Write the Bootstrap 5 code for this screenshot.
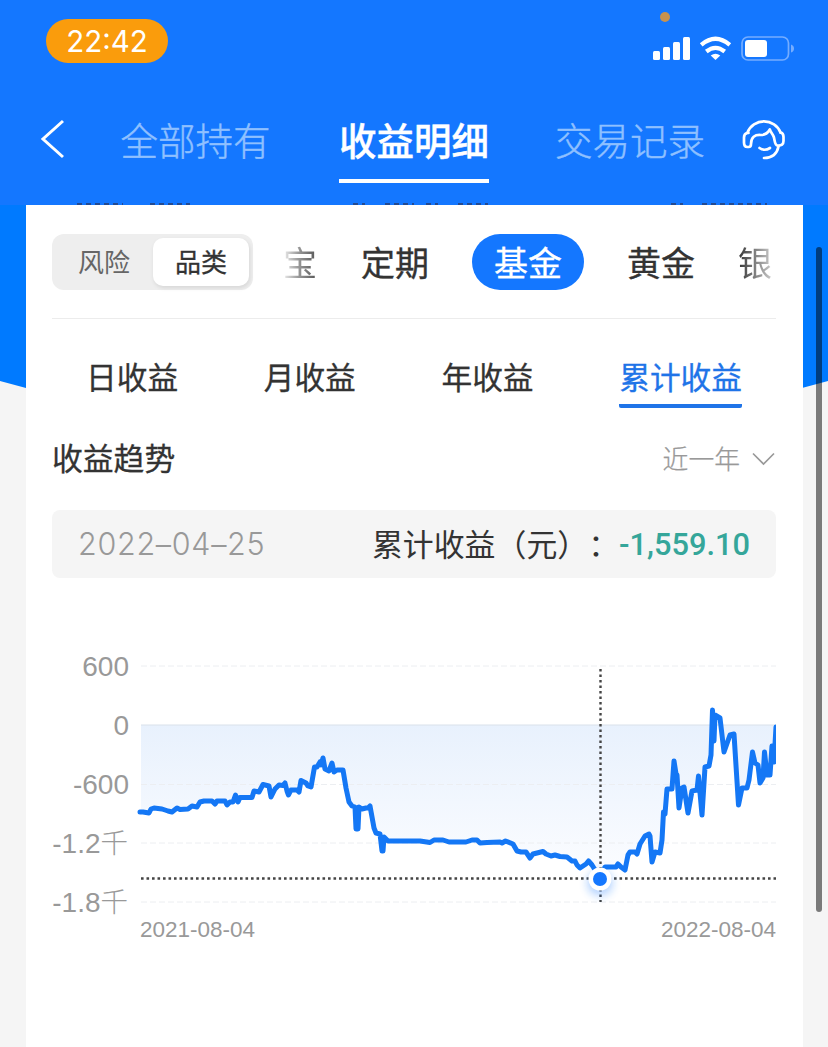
<!DOCTYPE html>
<html lang="zh-CN">
<head>
<meta charset="utf-8">
<meta name="viewport" content="width=device-width, initial-scale=1">
<title>收益明细</title>
<link href="https://cdn.jsdelivr.net/npm/bootstrap@5.3.0/dist/css/bootstrap.min.css" rel="stylesheet">
<style>
  :root { --brand: #1477ff; --ink: #333; --muted: #999; }
  body { font-family: "Liberation Sans", "Noto Sans CJK SC", sans-serif; background: #f5f5f5; color: var(--ink); width: 828px; height: 1047px; overflow: hidden; line-height: 1; text-spacing-trim: space-all; }
  svg { display: block; flex: none; }
  .screen { height: 1047px; }
  .app-head { height: 205px; background: var(--brand); color: #fff; z-index: 2; }
  .status-row { height: 83px; padding: 19px 34px 0 46px; }
  .clock { width: 122px; height: 44px; background: #fa9c0c; font: 400 29.5px/45px Inter, sans-serif; }
  .status-icons { padding-top: 17px; }
  .mic-dot { left: 660px; top: 12px; width: 10px; height: 10px; background: #c8924e; }
  .nav-row { height: 122px; padding-left: 40px; font-size: 37.5px; }
  .nav-row .head-tab { height: 74px; margin-top: 26px; padding-top: 15px; line-height: 37px; color: #8fc0ff; white-space: nowrap; font-weight: 300; -webkit-text-stroke: .4px; }
  .nav-row .head-tab.active { color: #fff; font-weight: 500; border-bottom: 4.5px solid #fff; width: 150px; }
  .body-area::before { content: ""; position: absolute; left: 0; right: 0; top: 0; height: 200px; background: #007aff; clip-path: polygon(0 0, 100% 0, 100% 176px, 802px 183px, 26px 183px, 0 176px); }
  .sheet { width: 777px; height: 842px; margin-left: 25.5px; background: #fff; padding: 29px 26.5px 0; }
  .filter-row { height: 56px; }
  .segment { width: 201px; height: 56px; background: #eee; border-radius: 12px; padding: 4px; font-size: 26px; color: #666; }
  .segment span { padding-top: 2px; }
  .segment .seg-on { width: 96px; height: 48px; border-radius: 10px; background: #fff; color: var(--ink); box-shadow: 1px 2px 4px rgba(0,0,0,.1); -webkit-text-stroke: .3px; }
  .segment .seg-off { width: 97px; padding-right: 1px; }
  .kinds { font-size: 34px; height: 56px; margin-left: 30px; width: 493px; white-space: nowrap; line-height: 48px; -webkit-text-stroke: .35px; }
  .kinds span { padding-top: 3px; }
  .kinds .kind-on { width: 112px; height: 56px; background: var(--brand); color: #fff; }
  .kinds .fade-l, .kinds .fade-r { -webkit-background-clip: text; background-clip: text; color: transparent; -webkit-text-stroke: 0; }
  .kinds .fade-l { background-image: linear-gradient(90deg, #eee 0, #999 45%, #555 100%); }
  .kinds .fade-r { background-image: linear-gradient(90deg, #333 0, #777 45%, #ccc 100%); }
  .rule { height: 1px; background: #ececec; margin-top: 28px; }
  .periods { font-size: 30.7px; padding: 42px 34px 0 34px; height: 89px; -webkit-text-stroke: .3px; }
  .periods .period { height: 47px; line-height: 36px; }
  .periods .period.active { color: #1f74e8; border-bottom: 4px solid #1f74e8; border-radius: 2px; }
  .trend { height: 102px; font-size: 30.8px; }
  .trend .trend-title { padding-top: 3px; -webkit-text-stroke: .3px; }
  .range { font-size: 25.8px; color: var(--muted); font-weight: 300; }
  .range .range-name { padding-top: 3px; -webkit-text-stroke: .25px; }
  .summary { height: 68px; background: #f5f5f5; border-radius: 8px; padding: 0 26px; font-size: 30.9px; }
  .summary .summary-name { padding-top: 4px; }
  .summary .day { font: 300 30.5px/1 Inter, sans-serif; color: var(--muted); letter-spacing: .7px; }
  .summary .amount { font: 500 30.8px/1 Roboto, sans-serif; color: #35a69a; padding-top: 3px; }
  .chart { margin-top: 62px; }
  .chart text { fill: var(--muted); }
  .thumb { left: 816px; top: 247px; width: 6px; height: 665px; background: rgba(0,0,0,.5); z-index: 3; }
</style>
</head>
<body>
<div class="screen position-relative">
  <header class="app-head position-relative">
    <span class="mic-dot position-absolute rounded-circle"></span>
    <div class="status-row d-flex justify-content-between align-items-start">
      <div class="clock rounded-pill text-center">22:42</div>
      <div class="status-icons d-flex">
        <svg width="142" height="27" viewBox="652 36 142 27">
          <g fill="#fff"><rect x="653" y="51" width="7" height="9" rx="1.5"/><rect x="663" y="47" width="7" height="13" rx="1.5"/><rect x="673" y="42" width="7" height="18" rx="1.5"/><rect x="683" y="37" width="7" height="23" rx="1.5"/>
          <path d="M715.5 60l-4.800-4.400q4.800-3.600 9.600 0z"/></g>
          <g fill="none" stroke="#fff" stroke-width="4.200"><path d="M701.200 44.800q14.300-12.200 28.600 0"/><path d="M706.300 51.500q9.200-7.400 18.400 0"/></g>
          <rect x="742" y="37" width="46.500" height="23" rx="6" fill="none" stroke="#75adff" stroke-width="1.700"/><rect x="745" y="40" width="22" height="17" rx="3" fill="#fff"/><path d="M791 44.500q3 1 3 4t-3 4z" fill="#75adff"/>
        </svg>
      </div>
    </div>
    <nav class="nav-row d-flex align-items-start">
      <svg width="26" height="40" viewBox="40 119 26 40" style="margin-top:36px"><path d="M63 121L43 139l20 18" fill="none" stroke="#fff" stroke-width="3"/></svg>
      <span class="head-tab" style="margin-left:54.5px">全部持有</span>
      <span class="head-tab active" style="margin-left:68.500px">收益明细</span>
      <span class="head-tab" style="margin-left:66px">交易记录</span>
      <svg width="46" height="44" viewBox="741 118 46 44" style="margin-left:36px;margin-top:35px">
        <g fill="none" stroke="#fff" stroke-width="2.700" stroke-linecap="round" stroke-linejoin="round">
          <path d="M747.5 132.500C750 125.500 757 121.300 764 121.300S778 125.500 780.500 132.500"/>
          <path d="M748.500 133h-1q-3.500.5-3.500 4.500v5q0 4.500 3.400 4.500h1.200q2.400 0 2.400-3c0-7 4-9.300 9.500-9 4.500.2 7-1.500 9.300-5.500 1.200 3.500 3 4.500 4 7.500 1 3 .8 8.500 3.700 8.500 4 .3 6-1 6-4.500v-4q0-4-3-4.500"/>
          <path d="M778.500 146.500c-1.500 7.500-7 11.500-14.500 11.500"/><path d="M759.500 148q5 3.500 10.500 0"/>
        </g>
      </svg>
    </nav>
    <svg class="position-absolute start-0 bottom-0" width="828" height="2"><path d="M77 1H123M150 1H190M353 1H365M385 1H414M426 1H438M458 1H488M671 1H683M702 1H767" stroke="#234a91" stroke-width="2" stroke-dasharray="5 4"/></svg>
  </header>
  <main class="body-area position-relative">
    <section class="sheet position-relative">
      <div class="filter-row d-flex">
        <div class="segment d-flex align-items-center">
          <span class="seg-off text-center">风险</span>
          <span class="seg-on d-flex align-items-center justify-content-center">品类</span>
        </div>
        <div class="kinds d-flex align-items-center">
          <span class="fade-l">宝</span>
          <span style="margin-left:44px">定期</span>
          <span class="kind-on rounded-pill d-flex align-items-center justify-content-center" style="margin-left:43px">基金</span>
          <span style="margin-left:43px">黄金</span>
          <span class="fade-r" style="margin-left:43px">银</span>
        </div>
      </div>
      <div class="rule"></div>
      <div class="periods d-flex justify-content-between">
        <span class="period">日收益</span><span class="period">月收益</span><span class="period">年收益</span><span class="period active">累计收益</span>
      </div>
      <div class="trend d-flex align-items-center justify-content-between">
        <span class="trend-title">收益趋势</span>
        <span class="range d-flex align-items-center"><span class="range-name">近一年</span>
          <svg width="24" height="14" viewBox="752 451 24 14" style="margin-left:12px"><path d="M753 452.500l10.500 10.500 10.500-10.500" fill="none" stroke="#999" stroke-width="1.700"/></svg>
        </span>
      </div>
      <div class="summary d-flex align-items-center">
        <span class="day">2022–04–25</span>
        <span class="summary-name ms-auto">累计收益（元）：</span>
        <span class="amount">-1,559.10</span>
      </div>
      <svg class="chart" width="724" height="310" viewBox="52 640 724 310">
        <defs>
          <linearGradient id="wash" gradientUnits="userSpaceOnUse" x1="0" y1="725" x2="0" y2="880"><stop offset="0" stop-color="#e8f1fd"/><stop offset="1" stop-color="#fcfdff"/></linearGradient>
          <clipPath id="below"><rect x="141" y="725" width="635" height="180"/></clipPath>
          <filter id="glow" x="-60%" y="-60%" width="220%" height="220%"><feGaussianBlur stdDeviation="4"/></filter>
        </defs>
        <path id="fillArea" fill="url(#wash)" clip-path="url(#below)"/>
        <g stroke="#eceef1" stroke-width="1" stroke-dasharray="6 3"><path d="M141 666H776M141 784.500H776M141 843H776M141 902H776"/></g>
        <path d="M141 725H776" stroke="#d9e1ea"/>
        <path id="curve" fill="none" stroke="#1477f5" stroke-width="5" stroke-linecap="round" stroke-linejoin="round"/>
        <path d="M141 878.500H776M600.500 669V902" stroke="#444" stroke-width="2.400" stroke-dasharray="2.600 2.900"/>
        <circle cx="600" cy="883" r="13" fill="#1477ff" opacity=".3" filter="url(#glow)"/>
        <circle cx="600" cy="879" r="11.500" fill="#fff"/><circle cx="600" cy="879" r="7" fill="#1477ff"/>
        <g font-size="28" text-anchor="end"><text x="129" y="676">600</text><text x="129" y="735">0</text><text x="129" y="794">-600</text><text x="128" y="853">-1.2<tspan font-size="27.500" font-weight="300">千</tspan></text><text x="128" y="912">-1.8<tspan font-size="27.500" font-weight="300">千</tspan></text></g>
        <g font-size="22.500"><text x="140" y="937">2021-08-04</text><text x="776" y="937" text-anchor="end">2022-08-04</text></g>
      </svg>
    </section>
  </main>
  <div class="thumb position-absolute rounded-pill"></div>
</div>
<script src="https://cdn.jsdelivr.net/npm/bootstrap@5.3.0/dist/js/bootstrap.bundle.min.js"></script>
<script>
  const pts = "140,812 143,812 149,813 151,809 154,808 162,809 168,811 172,812 177,808 180,809.5 188,809 192,806 197,807 200,802 204,801 212,801 215,804 217,801 225,801 227,805 230,802 233,802 235.5,795 238,802 240,797.5 252,797.5 254,791 259,792 263,784.5 269,786 271,797 275,789 279,785 283,785.5 285,783 287,791 288.5,795 291,790 297,790 299,792 301,780.5 306,783 308,786 311,787 314.5,767 317,767 320,762 321,765 323,758 325,769 329,771 332,763 334,772 337,770 343,770 346,788 349,802 352,806 355,807 356,829 358,829 359,807 362,809 366,808 368,808 370,806 374,828 376,833 380,834 382,851 383,851 384,837 388,841 420,841 430,842.5 434,840 443,840 449,842 466,842 472,840 477,840 480,843 487,842.5 500,842 502,843 505.5,841 513,844 517,851 521,852 526,852 530,858 533,854 543,851.5 546,854 551,856 555,855 560,856.5 567,857 572,861 575,861 577,865 580,868 586,864 588.5,861 592,865 597,873 600,878.5 605,867 616,867 618,864 621,867 625,870 628,855 630,852 635,852 637,854 640,844 645,836 649,834 650,836 652,862 655,852 660,853 662,840 663.5,812 665,814 667,789 672,789 674,761 676.5,777 677,775 679,808 682,788 684,787 688,813 692,791 697,790 698.5,776 702,815 705,767 709,766 711,755 712.5,710 714,741 715,715 720,718 724,752 730,735 734,734 738.5,805 742,788 747,788 749,780 752.5,752 755,763 758,765 760,783 763,778 764.5,752 767,775 770,775 772,746 774,762 776,727";
  document.getElementById("curve").setAttribute("d", "M" + pts);
  document.getElementById("fillArea").setAttribute("d", "M140,725 " + pts + " 776,725Z");
</script>
</body>
</html>
